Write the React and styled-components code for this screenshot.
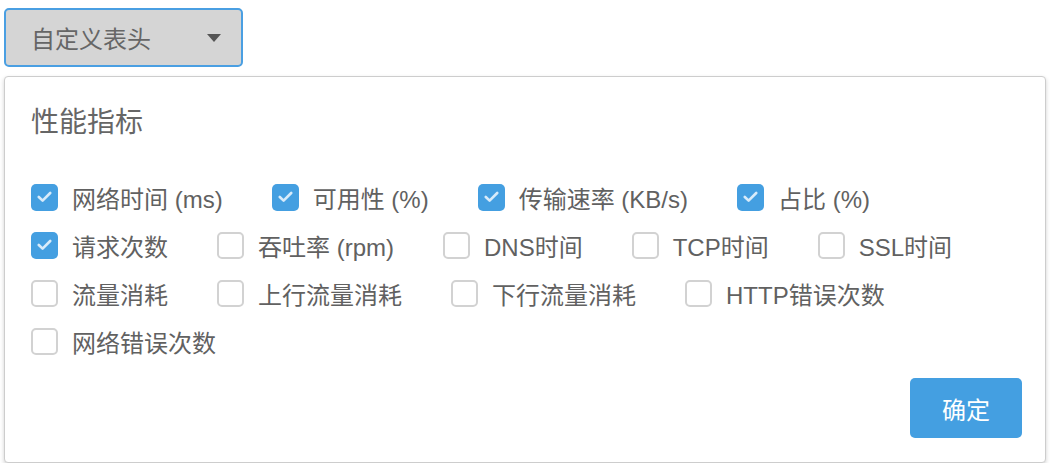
import React from 'react';
import styled, { createGlobalStyle } from 'styled-components';

const GlobalStyle = createGlobalStyle`
  body {
    margin: 0;
    background: #fff;
    font-family: "Liberation Sans", "Noto Sans CJK SC", sans-serif;
  }
`;

const metrics = [
  { label: '网络时间 (ms)', checked: true },
  { label: '可用性 (%)', checked: true },
  { label: '传输速率 (KB/s)', checked: true },
  { label: '占比 (%)', checked: true },
  { label: '请求次数', checked: true },
  { label: '吞吐率 (rpm)', checked: false },
  { label: 'DNS时间', checked: false },
  { label: 'TCP时间', checked: false },
  { label: 'SSL时间', checked: false },
  { label: '流量消耗', checked: false },
  { label: '上行流量消耗', checked: false },
  { label: '下行流量消耗', checked: false },
  { label: 'HTTP错误次数', checked: false },
  { label: '网络错误次数', checked: false },
];

const App = () => {
  const [items, setItems] = React.useState(metrics);

  const toggle = (i) => {
    setItems(items.map((it, idx) => (idx === i ? { ...it, checked: !it.checked } : it)));
  };

  return (
    <Page>
      <GlobalStyle />
      <Trigger>
        <span>自定义表头</span>
        <Caret />
      </Trigger>
      <Panel>
        <Title>性能指标</Title>
        <Options>
          {items.map((it, i) => (
            <Option key={it.label} onClick={() => toggle(i)}>
              <Box $checked={it.checked}>
                {it.checked && (
                  <svg width="15" height="12" viewBox="0 0 15 12">
                    <path d="M1.8 6 L5.6 9.6 L13.2 2" fill="none" stroke="#d8ebfa" strokeWidth="2.6" strokeLinecap="round" strokeLinejoin="round" />
                  </svg>
                )}
              </Box>
              <Label>{it.label}</Label>
            </Option>
          ))}
        </Options>
        <Footer>
          <Confirm>确定</Confirm>
        </Footer>
      </Panel>
    </Page>
  );
};

const Page = styled.div`
  padding: 8px 4px 0;
  width: 1042px;
`;

const Trigger = styled.button`
  display: flex;
  align-items: center;
  justify-content: space-between;
  box-sizing: border-box;
  width: 239px;
  height: 59px;
  padding: 0 20px 0 25px;
  background: #d5d5d5;
  border: 2px solid #4a9fe2;
  border-radius: 5px;
  font-family: inherit;
  font-size: 24px;
  color: #666;
  cursor: pointer;
`;

const Caret = styled.i`
  width: 0;
  height: 0;
  border-left: 7.5px solid transparent;
  border-right: 7.5px solid transparent;
  border-top: 8px solid #555;
`;

const Panel = styled.div`
  box-sizing: border-box;
  margin-top: 9px;
  width: 1042px;
  height: 387px;
  padding: 32px 23px 24px 26px;
  background: #fff;
  border: 1px solid #cdcdcd;
  border-radius: 4px;
  box-shadow: 0 2px 4px rgba(0, 0, 0, 0.18);
  display: flex;
  flex-direction: column;
`;

const Title = styled.div`
  font-size: 28px;
  line-height: 28px;
  color: #666;
  margin-bottom: 36px;
`;

const Options = styled.div`
  display: flex;
  flex-wrap: wrap;
  column-gap: 49px;
`;

const Option = styled.label`
  display: flex;
  align-items: center;
  height: 48px;
  cursor: pointer;
`;

const Box = styled.span`
  box-sizing: border-box;
  display: flex;
  align-items: center;
  justify-content: center;
  flex: none;
  width: 27px;
  height: 27px;
  margin-right: 14px;
  border-radius: 5px;
  background: ${(p) => (p.$checked ? '#449fe1' : '#fff')};
  border: ${(p) => (p.$checked ? 'none' : '2px solid #d2d2d2')};
`;

const Label = styled.span`
  font-size: 24px;
  color: #616161;
  white-space: nowrap;
`;

const Footer = styled.div`
  margin-top: auto;
  display: flex;
  justify-content: flex-end;
`;

const Confirm = styled.button`
  width: 112px;
  height: 60px;
  background: #449fe1;
  border: none;
  border-radius: 5px;
  color: #fff;
  font-family: inherit;
  font-size: 24px;
  cursor: pointer;
`;

export default App;
